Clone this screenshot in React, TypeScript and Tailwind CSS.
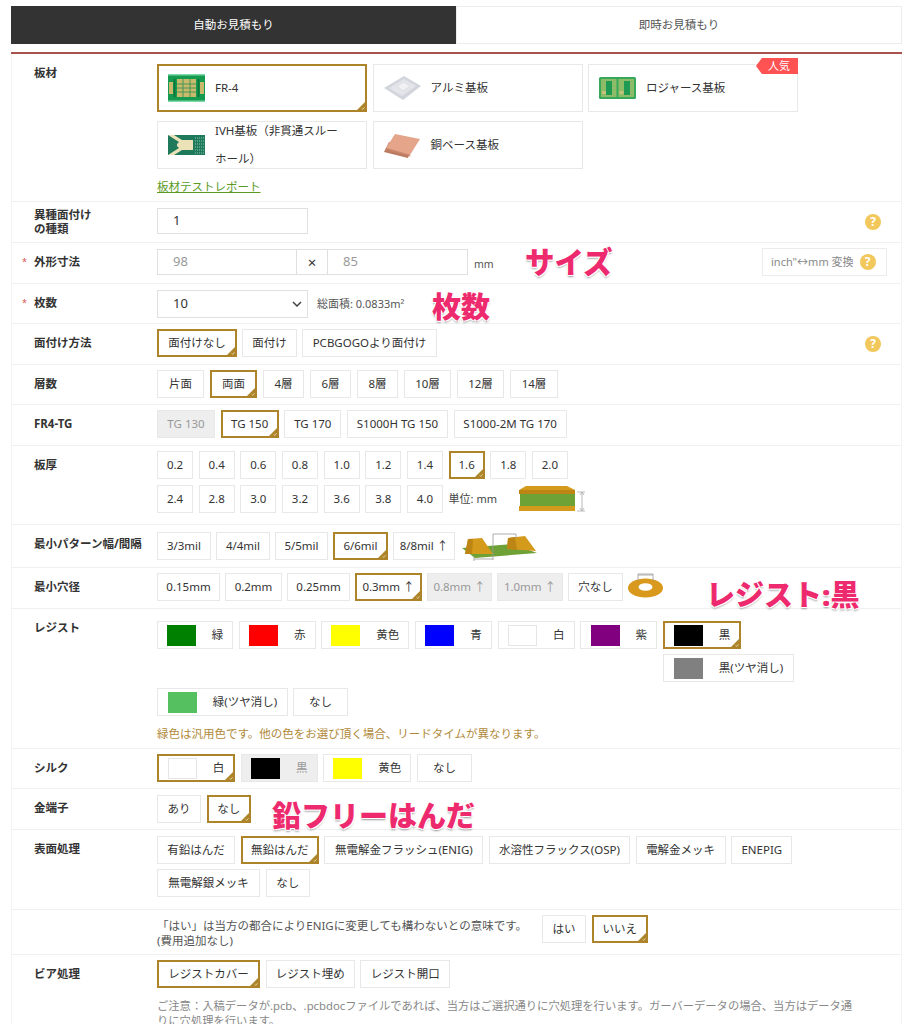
import type { ReactNode } from 'react';

const font = "font-['Noto_Sans','Noto_Sans_CJK_JP',sans-serif]";

type OptionProps = {
  label: string;
  selected?: boolean;
  disabled?: boolean;
  swatch?: string;
  width?: string;
};

function Corner() {
  return (
    <svg viewBox="0 0 10 10" className="absolute right-[-1px] bottom-[-1px] h-[10px] w-[10px]">
      <path d="M10 0V10H0Z" fill="#ad8429" />
      <path d="M5.5 7.2 6.8 8.4 8.6 6.2" fill="none" stroke="#e8d9b0" strokeWidth="0.8" />
    </svg>
  );
}

function Option({ label, selected, disabled, swatch, width }: OptionProps) {
  const box = selected ? 'border-2 border-[#ad8429]' : 'border border-[#e8e8e8]';
  const pad = width ? `${width} justify-center` : selected ? 'px-[8px]' : 'px-[9px]';
  return (
    <div
      className={`relative flex h-7 shrink-0 items-center whitespace-nowrap text-[11.5px] ${box} ${pad} ${
        disabled ? 'bg-[#eeeeee] text-[#999999]' : 'bg-white text-[#333333]'
      }`}
    >
      {swatch && <span className={`mr-[16px] h-[21px] w-[29px] ${swatch}`} />}
      {label}
      {selected && <Corner />}
    </div>
  );
}

function Options({
  items,
  selected,
  off = [],
  gap = 'gap-[5.67px]',
}: {
  items: [string, string][];
  selected?: string;
  off?: string[];
  gap?: string;
}) {
  return (
    <div className={`flex ${gap}`}>
      {items.map(([item, width]) => (
        <Option key={item} label={item} width={width} selected={item === selected} disabled={off.includes(item)} />
      ))}
    </div>
  );
}

function Row({
  label,
  required,
  height,
  top = 'pt-[5px]',
  children,
}: {
  label?: ReactNode;
  required?: boolean;
  height: string;
  top?: string;
  children: ReactNode;
}) {
  return (
    <div className={`relative flex border-b border-[#f0f0f0] ${height}`}>
      <div className="relative w-[145px] shrink-0 pt-[5px] pl-[22px] text-[11.5px] leading-7 font-bold text-[#333333]">
        {required && <span className="absolute top-[5px] left-[10px] text-[9px] font-normal text-[#d9534f]">*</span>}
        {label}
      </div>
      <div className={`min-w-0 flex-1 ${top}`}>{children}</div>
    </div>
  );
}

function Help({ className = '' }: { className?: string }) {
  return (
    <span
      className={`flex h-4 w-4 items-center justify-center rounded-full bg-[#f2c75c] text-[12px] font-bold text-white ${className}`}
    >
      ?
    </span>
  );
}

function Fr4Thumb() {
  return (
    <svg viewBox="0 0 37 28" className="h-[28px] w-[37px] shrink-0">
      <rect width="37" height="28" fill="#7fd8a8" />
      <rect y="1.5" width="37" height="25" fill="#159a50" />
      <rect x="1" y="8" width="4" height="12" fill="#c9b96c" />
      <rect x="32" y="8" width="4" height="12" fill="#c9b96c" />
      <rect x="9" y="5" width="19" height="18" fill="#c9b96c" />
      <path d="M9 10H28M9 14H28M9 18H28M15 5V23M22 5V23" stroke="#2b8f4f" strokeWidth="0.8" />
      <path d="M6.5 5V23M30.5 5V23" stroke="#0c7038" strokeWidth="1.6" />
    </svg>
  );
}

function AluThumb() {
  return (
    <svg viewBox="0 0 37 28" className="h-[28px] w-[37px] shrink-0">
      <path d="M0 14 20 2 37 12 19 26Z" fill="#d3d5dc" />
      <path d="M5 14 20 5 32 12 18 22Z" fill="#e4e5ea" />
      <path d="M13 12 20 8 26 12 19 17Z" fill="#f1f1f4" stroke="#cfd1d8" strokeWidth="0.5" />
    </svg>
  );
}

function RogersThumb() {
  return (
    <svg viewBox="0 0 37 28" className="h-[28px] w-[37px] shrink-0">
      <rect x="0" y="3" width="37" height="22" rx="1.5" fill="#35a85a" />
      <rect x="2" y="5" width="15.5" height="18" fill="#8dbb68" />
      <rect x="19.5" y="5" width="15.5" height="18" fill="#8dbb68" />
      <rect x="7" y="7" width="6" height="14" fill="#1f9a55" />
      <rect x="25" y="7" width="6" height="14" fill="#1f9a55" />
      <rect x="3" y="17" width="4" height="3" fill="#c4c27a" />
      <rect x="20.5" y="17" width="4" height="3" fill="#c4c27a" />
    </svg>
  );
}

function IvhThumb() {
  return (
    <svg viewBox="0 0 37 28" className="h-[28px] w-[37px] shrink-0">
      <rect y="4" width="37" height="20" fill="#1f7a5c" />
      <path d="M0 4H6L14 9H25V19H14L6 24H0L11 17 8 14 11 11Z" fill="#ece2b8" />
      <path d="M2 14H9" stroke="#1f7a5c" strokeWidth="2" />
      <path d="M27 7H36M27 10H36M27 13H36M27 16H36M27 19H36M27 22H36" stroke="#8cc4ab" strokeWidth="1.2" strokeDasharray="1 1" />
    </svg>
  );
}

function CopperThumb() {
  return (
    <svg viewBox="0 0 37 28" className="h-[28px] w-[37px] shrink-0">
      <path d="M0 21 5 11 28 14 24 27Z" fill="#bb7a60" />
      <path d="M2 17 11 3 36 8 26 24Z" fill="#e5a58a" />
      <path d="M2 17 26 24 26.5 25.5 1.5 19Z" fill="#c9856a" />
    </svg>
  );
}

function Card({ thumb, children, selected }: { thumb: ReactNode; children: ReactNode; selected?: boolean }) {
  return (
    <div
      className={`relative flex h-12 w-[210px] shrink-0 items-center gap-[10px] bg-white text-[11.5px] text-[#333333] ${
        selected ? 'border-2 border-[#ad8429] pl-[9px]' : 'border border-[#e8e8e8] pl-[10px]'
      }`}
    >
      {thumb}
      {children}
      {selected && <Corner />}
    </div>
  );
}

function StackIcon() {
  return (
    <svg viewBox="0 0 66 28" className="ml-[16px] h-7 w-[66px] shrink-0">
      <path d="M0 5 7 1H48L56 5V9H0Z" fill="#d49a1c" />
      <path d="M0 5H56V9H0Z" fill="#bd8513" />
      <rect x="1" y="9" width="55" height="12" fill="#6fa236" />
      <path d="M0 21H56V26H0Z" fill="#d49a1c" />
      <path d="M63 8V25M61 10 63 7 65 10M61 23 63 26 65 23M58 7H66M58 26H66" fill="none" stroke="#a8a8a8" strokeWidth="0.8" />
    </svg>
  );
}

function TraceIcon() {
  return (
    <svg viewBox="0 0 78 30" className="ml-1 h-[30px] w-[78px] shrink-0">
      <path d="M3 17 16 27 78 22 54 13Z" fill="#6fa236" />
      <path d="M6 23 9 8 23 7 34 23Z" fill="#d49a1c" />
      <path d="M6 23 9 8 14 8 13 23Z" fill="#bd8513" />
      <path d="M48 18 49 7 66 5 77 20Z" fill="#d49a1c" />
      <path d="M48 18 49 7 56 6 58 19Z" fill="#bd8513" />
      <path d="M34 3H57M34 3V29M57 3V7M15 28H34M15 26V30" fill="none" stroke="#9a9a9a" strokeWidth="0.8" />
    </svg>
  );
}

function RingIcon() {
  return (
    <svg viewBox="0 0 37 25" className="ml-1 h-[25px] w-[37px] shrink-0 self-start">
      <ellipse cx="18.5" cy="15" rx="17.5" ry="9.5" fill="#d9991c" />
      <ellipse cx="18.5" cy="14" rx="7" ry="3.8" fill="#ffffff" />
      <path d="M11 8V1H26V8M11 2H26" fill="none" stroke="#9a9a9a" strokeWidth="0.8" />
    </svg>
  );
}

const noteShadow = '[text-shadow:1px_1px_0_#fff,-1px_-1px_0_#fff,1px_-1px_0_#fff,-1px_1px_0_#fff,0_2px_2px_#999]';

function Note({ className, children }: { className: string; children: string }) {
  return (
    <span
      className={`absolute z-10 whitespace-nowrap leading-none font-black text-[#ee2a6e] ${noteShadow} ${className}`}
    >
      {children}
    </span>
  );
}

export default function App() {
  return (
    <div className={`relative h-[1024px] overflow-hidden bg-white pt-[6px] ${font}`}>
      <div className="ml-[11px] w-[891px]">
        <div className="flex h-[38px] text-[11.5px]">
          <div className="flex w-[445px] items-center justify-center bg-[#333333] text-white">自動お見積もり</div>
          <div className="flex flex-1 items-center justify-center border border-[#ececec] text-[#555555]">
            即時お見積もり
          </div>
        </div>
        <div className="mt-2 h-[2px] bg-[#a9534f]" />

        <div className="border-x border-[#f4f4f4]">
          <Row label="板材" height="h-[148px]" top="pt-[10px]">
            <div className="flex gap-[5.5px]">
              <Card thumb={<Fr4Thumb />} selected>
                FR-4
              </Card>
              <Card thumb={<AluThumb />}>アルミ基板</Card>
              <Card thumb={<RogersThumb />}>
                ロジャース基板
                <span className="absolute top-[-7px] right-[-1px] flex h-4 w-[42px] items-center justify-center bg-[#ff5252] pl-1 text-[11px] text-white [clip-path:polygon(14%_0,100%_0,100%_100%,14%_100%,0_50%)]">
                  人気
                </span>
              </Card>
            </div>
            <div className="mt-[9px] flex gap-[5.5px]">
              <Card thumb={<IvhThumb />}>
                <span className="w-[125px] leading-7">IVH基板（非貫通スルーホール）</span>
              </Card>
              <Card thumb={<CopperThumb />}>銅ベース基板</Card>
            </div>
            <a className="mt-[9px] block text-[11.5px] text-[#5a9a1f] underline">板材テストレポート</a>
          </Row>

          <Row
            label={
              <span className="block pt-px leading-[14px]">
                異種面付け
                <br />
                の種類
              </span>
            }
            height="h-[41px]"
            top="pt-[6px]"
          >
            <div className="flex h-[26px] w-[151px] items-center border border-[#e0e0e0] pl-[15px] text-[13px] text-[#333333]">
              1
            </div>
            <Help className="absolute top-[12px] right-[20px]" />
          </Row>

          <Row label="外形寸法" required height="h-[41px]" top="pt-[6px]">
            <div className="flex items-center">
              <div className="flex h-[26px] w-[140px] items-center border border-[#e0e0e0] pl-[15px] text-[13px] text-[#999999]">
                98
              </div>
              <div className="flex h-[26px] w-[30px] items-center justify-center border-y border-[#e0e0e0] text-[15px] text-[#333333]">
                ×
              </div>
              <div className="flex h-[26px] w-[141px] items-center border border-[#e0e0e0] pl-[15px] text-[13px] text-[#999999]">
                85
              </div>
              <span className="ml-[6px] pt-[6px] text-[10.5px] text-[#555555]">mm</span>
            </div>
            <div className="absolute top-[5px] right-[14px] flex h-7 w-[125px] items-center gap-[6px] border border-[#ececec] pl-2 text-[11px] whitespace-nowrap text-[#888888]">
              inch"↔mm 変換
              <Help />
            </div>
          </Row>

          <Row label="枚数" required height="h-[40px]" top="pt-[6px]">
            <div className="flex items-center">
              <div className="flex h-7 w-[151px] items-center justify-between border border-[#e0e0e0] pr-[5px] pl-[15px] text-[13px] text-[#333333]">
                10
                <svg viewBox="0 0 10 6" className="h-[6px] w-[10px]">
                  <path d="M1 1 5 5 9 1" fill="none" stroke="#444444" strokeWidth="1.5" />
                </svg>
              </div>
              <span className="ml-[9px] text-[11px] text-[#555555]">総面積: 0.0833m²</span>
            </div>
          </Row>

          <Row label="面付け方法" height="h-[41px]">
            <Options
              gap="gap-[5px]"
              items={[
                ['面付けなし', 'w-[80px]'],
                ['面付け', 'w-[55px]'],
                ['PCBGOGOより面付け', 'w-[135px]'],
              ]}
              selected="面付けなし"
            />
            <Help className="absolute top-[12px] right-[20px]" />
          </Row>

          <Row label="層数" height="h-[40px]">
            <Options
              gap="gap-[6px]"
              items={[
                ['片面', 'w-[47px]'],
                ['両面', 'w-[47px]'],
                ['4層', 'w-[41px]'],
                ['6層', 'w-[41px]'],
                ['8層', 'w-[41px]'],
                ['10層', 'w-[47px]'],
                ['12層', 'w-[47px]'],
                ['14層', 'w-[48px]'],
              ]}
              selected="両面"
            />
          </Row>

          <Row label="FR4-TG" height="h-[41px]">
            <Options
              items={[
                ['TG 130', 'w-[58px]'],
                ['TG 150', 'w-[58px]'],
                ['TG 170', 'w-[57px]'],
                ['S1000H TG 150', 'w-[101px]'],
                ['S1000-2M TG 170', 'w-[113px]'],
              ]}
              selected="TG 150"
              off={['TG 130']}
            />
          </Row>

          <Row label="板厚" height="h-[79px]">
            <Options
              items={[
                ['0.2', 'w-[36px]'],
                ['0.4', 'w-[36px]'],
                ['0.6', 'w-[36px]'],
                ['0.8', 'w-[36px]'],
                ['1.0', 'w-[36px]'],
                ['1.2', 'w-[36px]'],
                ['1.4', 'w-[36px]'],
                ['1.6', 'w-[36px]'],
                ['1.8', 'w-[36px]'],
                ['2.0', 'w-[36px]'],
              ]}
              selected="1.6"
            />
            <div className="mt-[6px] flex items-center gap-[5.67px]">
              <Options
                items={[
                  ['2.4', 'w-[36px]'],
                  ['2.8', 'w-[36px]'],
                  ['3.0', 'w-[36px]'],
                  ['3.2', 'w-[36px]'],
                  ['3.6', 'w-[36px]'],
                  ['3.8', 'w-[36px]'],
                  ['4.0', 'w-[36px]'],
                ]}
              />
              <span className="text-[11px] text-[#444444]">単位: mm</span>
              <StackIcon />
            </div>
          </Row>

          <Row label="最小パターン幅/間隔" height="h-[43px]" top="pt-[6px]">
            <div className="flex items-center">
              <Options
                gap="gap-[5px]"
                items={[
                  ['3/3mil', 'w-[54px]'],
                  ['4/4mil', 'w-[54px]'],
                  ['5/5mil', 'w-[53px]'],
                  ['6/6mil', 'w-[55px]'],
                  ['8/8mil ↑', 'w-[62px]'],
                ]}
                selected="6/6mil"
              />
              <TraceIcon />
            </div>
          </Row>

          <Row label="最小穴径" height="h-[41px]">
            <div className="flex items-center">
              <Options
                gap="gap-[5px]"
                items={[
                  ['0.15mm', 'w-[63px]'],
                  ['0.2mm', 'w-[57px]'],
                  ['0.25mm', 'w-[63px]'],
                  ['0.3mm ↑', 'w-[67px]'],
                  ['0.8mm ↑', 'w-[65px]'],
                  ['1.0mm ↑', 'w-[66px]'],
                  ['穴なし', 'w-[55px]'],
                ]}
                selected="0.3mm ↑"
                off={['0.8mm ↑', '1.0mm ↑']}
              />
              <RingIcon />
            </div>
          </Row>

          <Row label="レジスト" height="h-[140px]" top="pt-[12px]">
            <div className="flex gap-[5.67px]">
              <Option label="緑" swatch="bg-[#008000]" width="w-[76px]" />
              <Option label="赤" swatch="bg-[#ff0000]" width="w-[77px]" />
              <Option label="黄色" swatch="bg-[#ffff00]" width="w-[88px]" />
              <Option label="青" swatch="bg-[#0000ff]" width="w-[77px]" />
              <Option label="白" swatch="bg-white border border-[#e5e5e5]" width="w-[77px]" />
              <Option label="紫" swatch="bg-[#800080]" width="w-[77px]" />
              <Option label="黒" swatch="bg-black" width="w-[78px]" selected />
            </div>
            <div className="mt-[5px] flex pl-[506px]">
              <Option label="黒(ツヤ消し)" swatch="bg-[#808080]" width="w-[131px]" />
            </div>
            <div className="mt-[6px] flex gap-[5px]">
              <Option label="緑(ツヤ消し)" swatch="bg-[#55c060]" width="w-[131px]" />
              <Option label="なし" width="w-[55px]" />
            </div>
            <p className="mt-[9px] text-[11.5px] text-[#b08a3a]">
              緑色は汎用色です。他の色をお選び頂く場合、リードタイムが異なります。
            </p>
          </Row>

          <Row label="シルク" height="h-[40px]">
            <div className="flex gap-[5.67px]">
              <Option label="白" swatch="bg-white border border-[#e5e5e5]" width="w-[78px]" selected />
              <Option label="黒" swatch="bg-black" width="w-[77px]" disabled />
              <Option label="黄色" swatch="bg-[#ffff00]" width="w-[88px]" />
              <Option label="なし" width="w-[55px]" />
            </div>
          </Row>

          <Row label="金端子" height="h-[41px]" top="pt-[6px]">
            <Options
              items={[
                ['あり', 'w-[44px]'],
                ['なし', 'w-[44px]'],
              ]}
              selected="なし"
            />
          </Row>

          <Row label="表面処理" height="h-[80px]" top="pt-[6px]">
            <Options
              items={[
                ['有鉛はんだ', 'w-[78px]'],
                ['無鉛はんだ', 'w-[78px]'],
                ['無電解金フラッシュ(ENIG)', 'w-[159px]'],
                ['水溶性フラックス(OSP)', 'w-[141px]'],
                ['電解金メッキ', 'w-[90px]'],
                ['ENEPIG', 'w-[61px]'],
              ]}
              selected="無鉛はんだ"
            />
            <div className="mt-[5px]">
              <Options
                items={[
                  ['無電解銀メッキ', 'w-[103px]'],
                  ['なし', 'w-[44px]'],
                ]}
              />
            </div>
          </Row>

          <Row height="h-[45px]">
            <div className="flex">
              <p className="w-[385px] pt-[3px] text-[11.5px] leading-[15px] text-[#555555]">
                「はい」は当方の都合によりENIGに変更しても構わないとの意味です。
                <br />
                (費用追加なし)
              </p>
              <Options
                items={[
                  ['はい', 'w-[44px]'],
                  ['いいえ', 'w-[56px]'],
                ]}
                selected="いいえ"
              />
            </div>
          </Row>

          <Row label="ビア処理" height="h-[80px]">
            <Options
              items={[
                ['レジストカバー', 'w-[103px]'],
                ['レジスト埋め', 'w-[89px]'],
                ['レジスト開口', 'w-[90px]'],
              ]}
              selected="レジストカバー"
            />
            <p className="mt-[10px] w-[704px] text-[11.3px] leading-[15px] text-[#888888]">
              ご注意：入稿データが.pcb、.pcbdocファイルであれば、当方はご選択通りに穴処理を行います。ガーバーデータの場合、当方はデータ通りに穴処理を行います。
            </p>
          </Row>
        </div>
      </div>

      <Note className="top-[247px] left-[525px] text-[29.5px]">サイズ</Note>
      <Note className="top-[292px] left-[432px] text-[29px]">枚数</Note>
      <Note className="top-[580px] left-[706px] text-[29px]">レジスト:黒</Note>
      <Note className="top-[801px] left-[272px] text-[29px]">鉛フリーはんだ</Note>
    </div>
  );
}
